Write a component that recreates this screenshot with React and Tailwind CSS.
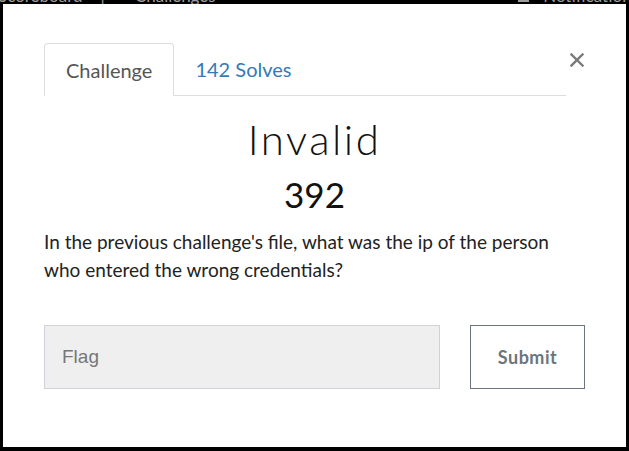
export default function App() {
  return (
    <div className="w-[629px] h-[451px] bg-black flex flex-col overflow-hidden" style={{ fontFamily: 'Lato, "Open Sans", sans-serif' }}>
      {/* navbar peeking above the modal */}
      <div className="h-[4px] overflow-hidden shrink-0">
        <div className="flex items-center -mt-[14px] text-[17px] text-[#9d9d9d] leading-[20px] whitespace-nowrap">
          <span className="-ml-[2px]">Scoreboard</span>
          <span className="ml-[18px]">|</span>
          <span className="ml-[30px]">Challenges</span>
          <span className="ml-auto w-[11px] h-[11px] bg-[#9d9d9d] mr-[14px]"></span>
          <span className="-mr-[10px]">Notifications</span>
        </div>
      </div>

      <div className="ml-[3px] mr-[3px] h-[443px] bg-white px-[41px] pt-[38px]">
        {/* tabs */}
        <div className="flex items-start">
          <div className="flex-1 flex items-end border-b border-[#dddddd]">
            <div className="h-[53px] px-[21px] flex items-center border border-[#dddddd] border-b-white rounded-t-[4px] -mb-px text-[20px] text-[#555555] bg-white">
              Challenge
            </div>
            <div className="h-[53px] px-[21px] flex items-center text-[20px] text-[#337ab7]">
              142 Solves
            </div>
          </div>
          <button className="ml-[3px] mt-[10px] w-[16px] h-[16px] flex items-center justify-center">
            <svg width="14" height="14" viewBox="0 0 14 14">
              <path d="M1.5 1.5 L12.5 12.5 M12.5 1.5 L1.5 12.5" stroke="#7a7a7a" strokeWidth="2.4" strokeLinecap="square" />
            </svg>
          </button>
        </div>

        {/* title */}
        <div className="text-center mt-[20px] text-[42px] leading-[46px] font-light tracking-[2.5px] text-[#111]">Invalid</div>
        <div className="text-center mt-[12px] text-[35px] leading-[40px] text-[#111]">392</div>

        <p className="mt-[14px] text-[19px] leading-[28px] text-[#222]">
          In the previous challenge's file, what was the ip of the person who entered the wrong credentials?
        </p>

        {/* flag form */}
        <div className="flex mt-[41px] gap-[30px]">
          <div className="w-[396px] shrink-0 h-[64px] bg-[#efefef] border border-[#cfd3d8] flex items-center pl-[17px] text-[19px] text-[#777]" style={{ fontFamily: '"Liberation Sans", Arial, sans-serif' }}>
            Flag
          </div>
          <button className="w-[115px] shrink-0 h-[64px] border border-[#6c757d] flex items-center justify-center text-[18px] font-bold tracking-[0.5px] text-[#6c757d] bg-white">
            Submit
          </button>
        </div>
      </div>
    </div>
  );
}
